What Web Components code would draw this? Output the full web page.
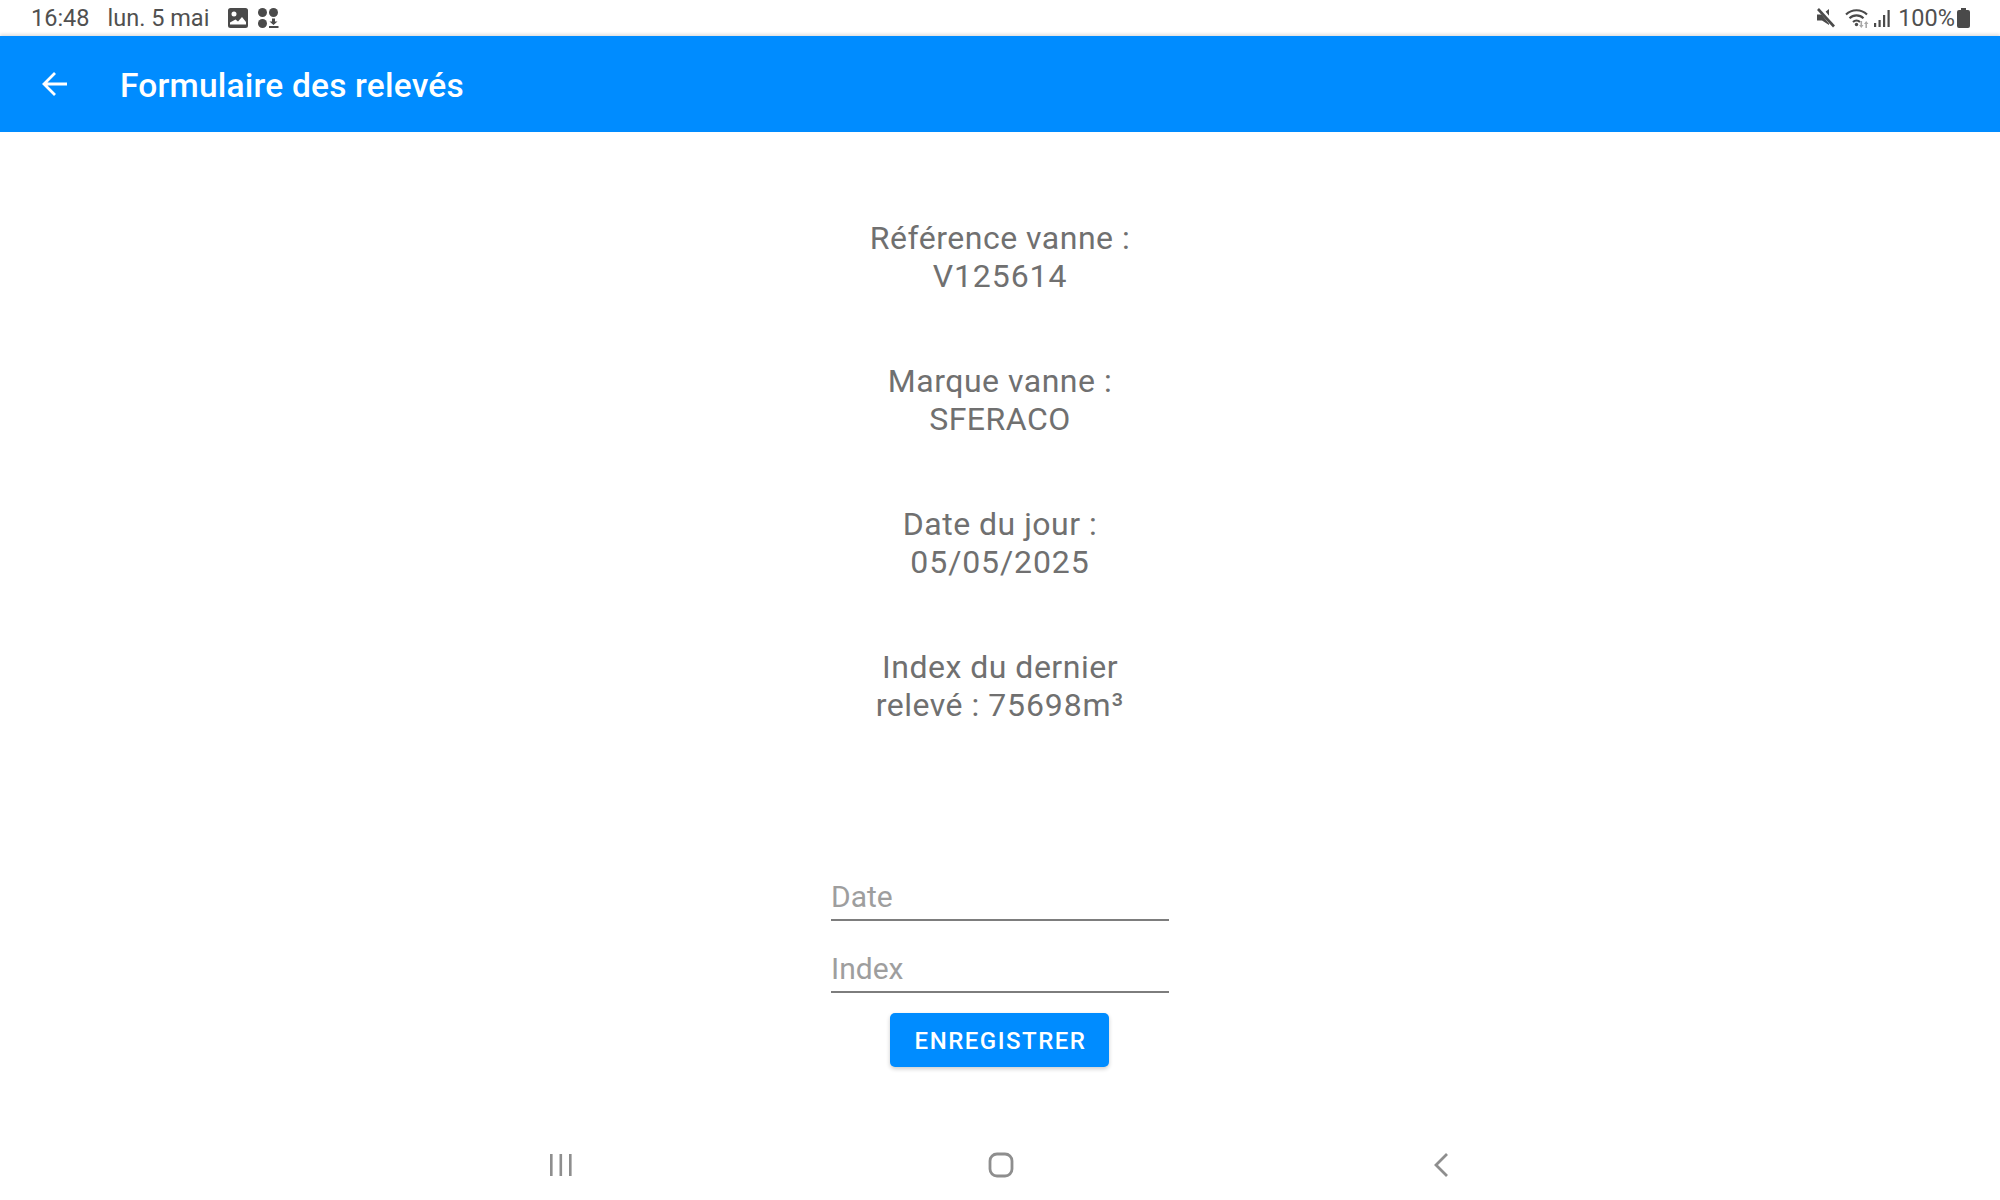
<!DOCTYPE html>
<html lang="fr">
<head>
<meta charset="utf-8">
<title>Formulaire des relevés</title>
<style>
  html, body { margin: 0; height: 100%; background: #fff; font-family: Roboto, "Liberation Sans", sans-serif; }
  #app { display: flex; flex-direction: column; height: 1200px; }
</style>
</head>
<body>
<template id="status-bar-template">
  <style>
    :host { display: flex; justify-content: space-between; align-items: center; height: 36px; padding: 0 30px 0 31px; box-sizing: border-box; background: #fff; color: #505050; font-size: 23.5px; flex: none; }
    .side { display: flex; align-items: center; }
    .date { margin-left: 18px; }
    svg { display: block; fill: #4a4a4a; }
  </style>
  <div class="side">
    <span>16:48</span><span class="date">lun. 5 mai</span>
    <svg style="margin-left:19px" width="20" height="20" viewBox="0 0 20 20"><path fill-rule="evenodd" d="M2.5 0h15A2.5 2.5 0 0 1 20 2.5v15a2.5 2.5 0 0 1-2.5 2.5h-15A2.5 2.5 0 0 1 0 17.500v-15A2.500 2.500 0 0 1 2.500 0zM6 3.500a2.500 2.500 0 1 0 0 5 2.500 2.500 0 0 0 0-5zM2 16.500h16v-2.500l-4-5-4 4.500-2.500-2L2 14.500z"/></svg>
    <svg style="margin-left:10px" width="21" height="20" viewBox="0 0 21 20"><circle cx="4.500" cy="4.500" r="4.500"/><circle cx="15.500" cy="4.500" r="4.500"/><circle cx="4.500" cy="15.500" r="4.500"/><path d="M14 10.500h3v3h2.500l-4 3.500-4-3.500H14zM11 18h9.500v2H11z"/></svg>
  </div>
  <div class="side">
    <svg width="20" height="20" viewBox="0 0 20 20"><path d="M0 6.500h5L12 1v16l-7-4.500H0z"/><path d="M2.500 0l15 18.500" stroke="#fff" stroke-width="5" fill="none"/><path d="M1 1l16 17.500" stroke="#4a4a4a" stroke-width="2.600" fill="none"/></svg>
    <svg style="margin-left:8px" width="25" height="20" viewBox="0 0 25 20"><g fill="none" stroke="#4a4a4a" stroke-width="2.100"><path d="M1 6.500a15 15 0 0 1 21 0"/><path d="M4.500 10.200a10 10 0 0 1 14 0"/><path d="M8 14a5 5 0 0 1 7 0"/></g><circle cx="11.500" cy="16.500" r="1.700"/><path d="M15.500 13h1.600v4h1.400l-2.200 3-2.200-3h1.400z" fill="#a8a8a8"/><path d="M22 20h-1.600v-4H19l2.200-3 2.200 3H22z" fill="#a8a8a8"/></svg>
    <svg style="margin-left:4px" width="16" height="20" viewBox="0 0 16 20"><rect x="0" y="15" width="2.200" height="4"/><rect x="4.500" y="12" width="2.200" height="7"/><rect x="9" y="7" width="2.200" height="12"/><rect x="13.500" y="2" width="2.200" height="17"/></svg>
    <span style="margin-left:8px">100%</span>
    <svg style="margin-left:2px" width="13" height="20" viewBox="0 0 13 20"><path d="M4 0h5v2h2a2 2 0 0 1 2 2v14a2 2 0 0 1-2 2H2a2 2 0 0 1-2-2V4a2 2 0 0 1 2-2h2z"/></svg>
  </div>
</template>

<template id="app-bar-template">
  <style>
    :host { display: flex; align-items: center; height: 96px; padding-left: 42px; box-sizing: border-box; background: #008cff; color: #fff; flex: none; position: relative; box-shadow: 0 -2px 3px rgba(0,0,0,.12); }
    svg { display: block; flex: none; }
    .title { margin-left: 52px; padding-top: 2px; font-size: 33.500px; font-weight: 500; letter-spacing: .2px; }
  </style>
  <svg width="26" height="26" viewBox="0 0 26 26" fill="none" stroke="#fff" stroke-width="2.800"><path d="M25 13H2M13 2L2 13l11 11"/></svg>
  <span class="title"><slot></slot></span>
</template>

<template id="info-block-template">
  <style>
    :host { display: block; width: 280px; text-align: center; color: #707070; font-size: 32px; line-height: 38px; letter-spacing: .5px; }
  </style>
  <slot></slot>
</template>

<template id="text-field-template">
  <style>
    :host { display: flex; align-items: flex-end; width: 338px; height: 54px; box-sizing: border-box; border-bottom: 2px solid #7d7d7d; color: #9e9e9e; font-size: 30px; line-height: 38px; padding-bottom: 3px; }
  </style>
  <slot></slot>
</template>

<template id="raised-button-template">
  <style>
    :host { display: flex; align-items: center; justify-content: center; width: 219px; height: 54px; padding: 2px 0 0 2px; box-sizing: border-box; border-radius: 5px; background: #008cff; color: #fff; font-size: 24px; font-weight: 500; letter-spacing: 1.500px; box-shadow: 0 2px 4px rgba(0,0,0,.2); }
  </style>
  <slot></slot>
</template>

<template id="nav-bar-template">
  <style>
    :host { display: flex; justify-content: center; align-items: center; height: 70px; flex: none; position: relative; }
    .slot-box { display: flex; justify-content: center; width: 440px; }
    svg { display: block; }
  </style>
  <div class="slot-box"><svg width="24" height="24" viewBox="0 0 24 24" fill="#8e8e8e"><rect x="2" y="1" width="2.600" height="22"/><rect x="11.500" y="1" width="2.600" height="22"/><rect x="21" y="1" width="2.600" height="22"/></svg></div>
  <div class="slot-box"><svg style="margin-left:2px" width="26" height="26" viewBox="0 0 26 26" fill="none" stroke="#8e8e8e" stroke-width="2.800"><rect x="2" y="2" width="22" height="22" rx="7"/></svg></div>
  <div class="slot-box"><svg style="margin-left:2px" width="16" height="24" viewBox="0 0 16 24" fill="none" stroke="#8e8e8e" stroke-width="2.800"><path d="M14 1L3 12l11 11"/></svg></div>
</template>

<template id="releve-form-template">
  <style>
    :host { display: flex; flex-direction: column; align-items: center; flex: 1; padding-top: 87px; box-sizing: border-box; }
    .infos { display: flex; flex-direction: column; align-items: center; gap: 67px; }
    .fields { display: flex; flex-direction: column; gap: 18px; margin-top: 143px; }
    raised-button { margin: 20px 1px 0 0; }
    .num { letter-spacing: .9px; }
  </style>
  <div class="infos">
    <info-block>Référence vanne :<br><span class="num">V125614</span></info-block>
    <info-block>Marque vanne :<br>SFERACO</info-block>
    <info-block>Date du jour :<br><span class="num">05/05/2025</span></info-block>
    <info-block>Index du dernier<br>relevé : <span class="num">75698m³</span></info-block>
  </div>
  <div class="fields">
    <text-field>Date</text-field>
    <text-field>Index</text-field>
  </div>
  <raised-button>ENREGISTRER</raised-button>
</template>

<div id="app">
  <status-bar></status-bar>
  <app-bar>Formulaire des relevés</app-bar>
  <releve-form></releve-form>
  <nav-bar></nav-bar>
</div>

<script>
  (function () {
    function define(name) {
      const template = document.getElementById(name + "-template");
      customElements.define(
        name,
        class extends HTMLElement {
          constructor() {
            super();
            this.attachShadow({ mode: "open" });
            this.shadowRoot.appendChild(template.content.cloneNode(true));
          }
        }
      );
    }
    ["status-bar", "app-bar", "info-block", "text-field", "raised-button", "nav-bar", "releve-form"].forEach(define);
  })();
</script>
</body>
</html>
